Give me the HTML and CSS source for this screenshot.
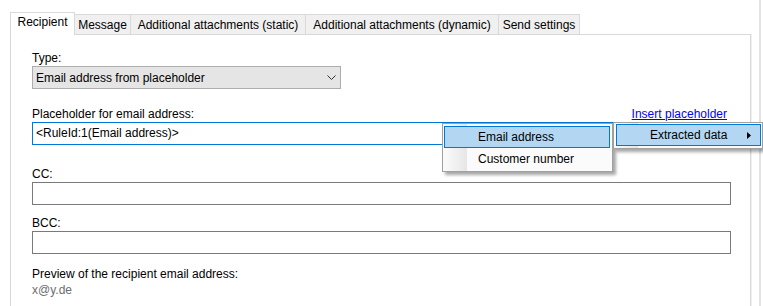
FILE: index.html
```html
<!DOCTYPE html>
<html lang="en">
<head>
  <meta charset="UTF-8" />
  <title>Recipient settings</title>
  <link rel="stylesheet" href="styles.css">
</head>
<body>
  <div class="screen">
    <div class="dialog">
      <div class="tabs">
        <div class="tab tab-recipient active">Recipient</div>
        <div class="tab tab-message">Message</div>
        <div class="tab tab-static">Additional attachments (static)</div>
        <div class="tab tab-dynamic">Additional attachments (dynamic)</div>
        <div class="tab tab-send">Send settings</div>
      </div>

      <div class="panel">
        <div class="field field-type">
          <div class="label">Type:</div>
          <div class="combo">
            <span>Email address from placeholder</span>
            <svg class="chevron" width="9" height="5" viewBox="0 0 9 5">
              <polyline points="0.5,0.5 4.5,4.5 8.5,0.5" fill="none" stroke="#333" stroke-width="1" />
            </svg>
          </div>
        </div>

        <div class="field field-placeholder">
          <div class="label label-row">
            <span>Placeholder for email address:</span>
            <a class="link" href="#">Insert placeholder</a>
          </div>
          <div class="input focused">&lt;RuleId:1(Email address)&gt;</div>
        </div>

        <div class="field field-cc">
          <div class="label">CC:</div>
          <div class="input"></div>
        </div>

        <div class="field field-bcc">
          <div class="label">BCC:</div>
          <div class="input"></div>
        </div>

        <div class="field field-preview">
          <div class="label">Preview of the recipient email address:</div>
          <div class="preview">x@y.de</div>
        </div>
      </div>
    </div>

    <div class="splitter"></div>

    <!-- context menu opened from "Insert placeholder" -->
    <div class="menu menu-sub">
      <div class="menu-item selected">Email address</div>
      <div class="menu-item">Customer number</div>
    </div>
    <div class="menu menu-main">
      <div class="menu-item selected">
        <span>Extracted data</span>
        <svg class="arrow" width="4" height="7" viewBox="0 0 4 7">
          <polygon points="0,0 4,3.5 0,7" fill="#000" />
        </svg>
      </div>
    </div>
  </div>
</body>
</html>
```

FILE: styles.css
```css
html, body {
  margin: 0;
  background: #ffffff;
}
body {
  font-family: 'Liberation Sans', Arial, sans-serif;
  font-size: 12px;
  color: #000;
}
.screen {
  position: relative;
  display: flex;
  width: 763px;
  height: 306px;
  overflow: hidden;
}
.dialog {
  flex: none;
  width: 741px;
  padding: 12px 0 0 10px;
}
.splitter {
  flex: none;
  width: 2px;
  margin-left: 8px;
  background: #e3e3e3;
}

/* tabs */
.tabs {
  display: flex;
  align-items: flex-end;
  height: 22px;
}
.tab {
  box-sizing: border-box;
  height: 20px;
  margin-right: -1px;
  padding-top: 3px;
  line-height: 15px;
  text-align: center;
  white-space: nowrap;
  background: #f0f0f0;
  border: 1px solid #d9d9d9;
  border-bottom: none;
}
.tab.active {
  position: relative;
  z-index: 1;
  height: 23px;
  margin-bottom: -1px;
  padding-top: 2px;
  background: #ffffff;
}
.tab-recipient { width: 65px; }
.tab-message { width: 57px; }
.tab-static { width: 176px; }
.tab-dynamic { width: 194px; }
.tab-send { width: 82px; }

/* panel */
.panel {
  height: 300px;
  padding: 16px 19px 0 21px;
  border: 1px solid #d9d9d9;
  box-shadow: 1px 0 0 #f0f0f0;
}
.label {
  line-height: 15px;
  white-space: nowrap;
}
.label-row {
  display: flex;
  justify-content: space-between;
  padding-right: 4px;
}
.link {
  color: #0000ff;
  text-decoration: underline;
}
.field-placeholder { margin-top: 18px; }
.field-cc { margin-top: 22px; }
.field-bcc { margin-top: 11px; }
.field-preview { margin-top: 13px; }

.combo {
  box-sizing: border-box;
  display: flex;
  align-items: center;
  justify-content: space-between;
  width: 309px;
  height: 23px;
  padding: 0 4px 0 3px;
  background: #e5e5e5;
  border: 1px solid #adadad;
}
.chevron {
  margin-right: 0;
}
.input {
  box-sizing: border-box;
  height: 23px;
  padding: 0 3px;
  line-height: 21px;
  border: 1px solid #7a7a7a;
  background: #fff;
}
.input.focused {
  border-color: #0078d7;
}
.preview {
  margin-top: 1px;
  line-height: 15px;
  color: #6d6d6d;
}

/* context menu */
.menu {
  position: absolute;
  box-sizing: border-box;
  border: 1px solid #a0a0a0;
  background: linear-gradient(to right, #fbfbfb, #e6e6e6) no-repeat 1px 0 / 23px 100%, #fbfbfb;
  box-shadow: 3px 3px 3px rgba(0, 0, 0, 0.35);
}
.menu-sub {
  left: 442px;
  top: 123px;
  width: 171px;
  height: 49px;
  padding: 2px 2px 1px 1px;
}
.menu-main {
  left: 613px;
  top: 122px;
  width: 150px;
  height: 27px;
  padding: 1px 1px 2px 2px;
  z-index: 2;
}
.menu-item {
  box-sizing: border-box;
  display: flex;
  align-items: center;
  height: 22px;
  padding: 0 10px 0 33px;
  line-height: 20px;
  white-space: nowrap;
  border: 1px solid transparent;
}
.menu-item.selected {
  background: #b3d7f3;
  border-color: #0078d7;
}
.arrow {
  margin-left: auto;
  margin-right: -1px;
}
```
